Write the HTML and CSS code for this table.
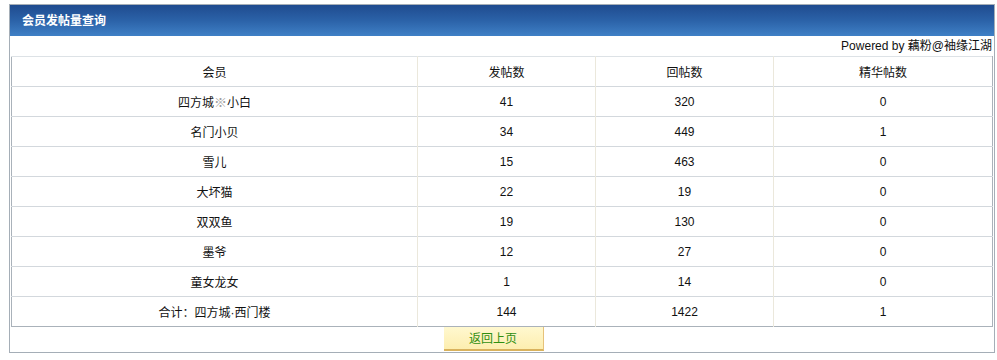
FILE: index.html
```html
<!DOCTYPE html>
<html lang="zh-CN">
<head>
<meta charset="utf-8">
<title>会员发帖量查询</title>
<link rel="stylesheet" href="styles.css">
</head>
<body>
<div class="panel">
  <div class="panel-head">会员发帖量查询</div>
  <div class="powered">Powered by 藕粉@袖缘江湖</div>
  <table class="stats">
    <colgroup>
      <col class="c1"><col class="c2"><col class="c3"><col class="c4">
    </colgroup>
    <thead>
      <tr><th>会员</th><th>发帖数</th><th>回帖数</th><th>精华帖数</th></tr>
    </thead>
    <tbody>
      <tr><td>四方城<span class="mark">※</span>小白</td><td>41</td><td>320</td><td>0</td></tr>
      <tr><td>名门小贝</td><td>34</td><td>449</td><td>1</td></tr>
      <tr><td>雪儿</td><td>15</td><td>463</td><td>0</td></tr>
      <tr><td>大坏猫</td><td>22</td><td>19</td><td>0</td></tr>
      <tr><td>双双鱼</td><td>19</td><td>130</td><td>0</td></tr>
      <tr><td>墨爷</td><td>12</td><td>27</td><td>0</td></tr>
      <tr><td>童女龙女</td><td>1</td><td>14</td><td>0</td></tr>
      <tr><td>合计：四方城·西门楼</td><td>144</td><td>1422</td><td>1</td></tr>
    </tbody>
  </table>
  <div class="panel-foot"><button class="back-btn" type="button">返回上页</button></div>
</div>
</body>
</html>
```
FILE: styles.css
```css
html, body {
  margin: 0;
  padding: 0;
  background: #ffffff;
}
body {
  padding: 4px 0 0 9px;
  font-family: "Noto Sans CJK SC", "Liberation Sans", sans-serif;
  font-size: 12px;
  color: #111111;
}
.panel {
  width: 984px;
  height: 347px;
  border: 1px solid #a5aeb7;
  display: flex;
  flex-direction: column;
}
.panel-head {
  height: 31px;
  line-height: 30px;
  padding-left: 12px;
  color: #ffffff;
  font-weight: bold;
  font-size: 12px;
  background: linear-gradient(to bottom, #1f4b8f 0%, #2b62a8 50%, #3f80c6 100%);
}
.powered {
  height: 20px;
  line-height: 20px;
  text-align: right;
  padding-right: 2px;
  font-family: "Liberation Sans", "Noto Sans CJK SC", sans-serif;
  font-size: 12px;
  color: #111111;
}
.stats {
  margin-left: 1px;
  width: 981px;
  border-collapse: collapse;
  table-layout: fixed;
  border: 1px solid #aab2ba;
  border-top-color: #dde2e6;
}
.c1 { width: 406px; }
.c2 { width: 178px; }
.c3 { width: 178px; }
.c4 { width: 219px; }
.stats th,
.stats td {
  height: 29px;
  padding: 0;
  text-align: center;
  font-weight: normal;
  font-size: 12px;
  border-top: 1px solid #d3d8dd;
  border-left: 1px solid #ebe8dc;
  font-family: "Liberation Sans", "Noto Sans CJK SC", sans-serif;
}
.stats th:first-child,
.stats td:first-child {
  border-left: none;
}
.stats thead th {
  border-top: none;
}
.mark {
  color: #a0a0a0;
  font-size: 13px;
}
.panel-foot {
  display: flex;
  justify-content: center;
  padding-right: 17px;
}
.back-btn {
  margin: 0;
  width: 100px;
  height: 24px;
  padding: 0;
  border: none;
  border-right: 1px solid #e6c27a;
  border-bottom: 2px solid #d9b25d;
  background: linear-gradient(to bottom, #fff8cf 0%, #fdeeb0 100%);
  color: #2f8f10;
  font-family: "Noto Sans CJK SC", sans-serif;
  font-size: 12px;
  line-height: 22px;
}
```
